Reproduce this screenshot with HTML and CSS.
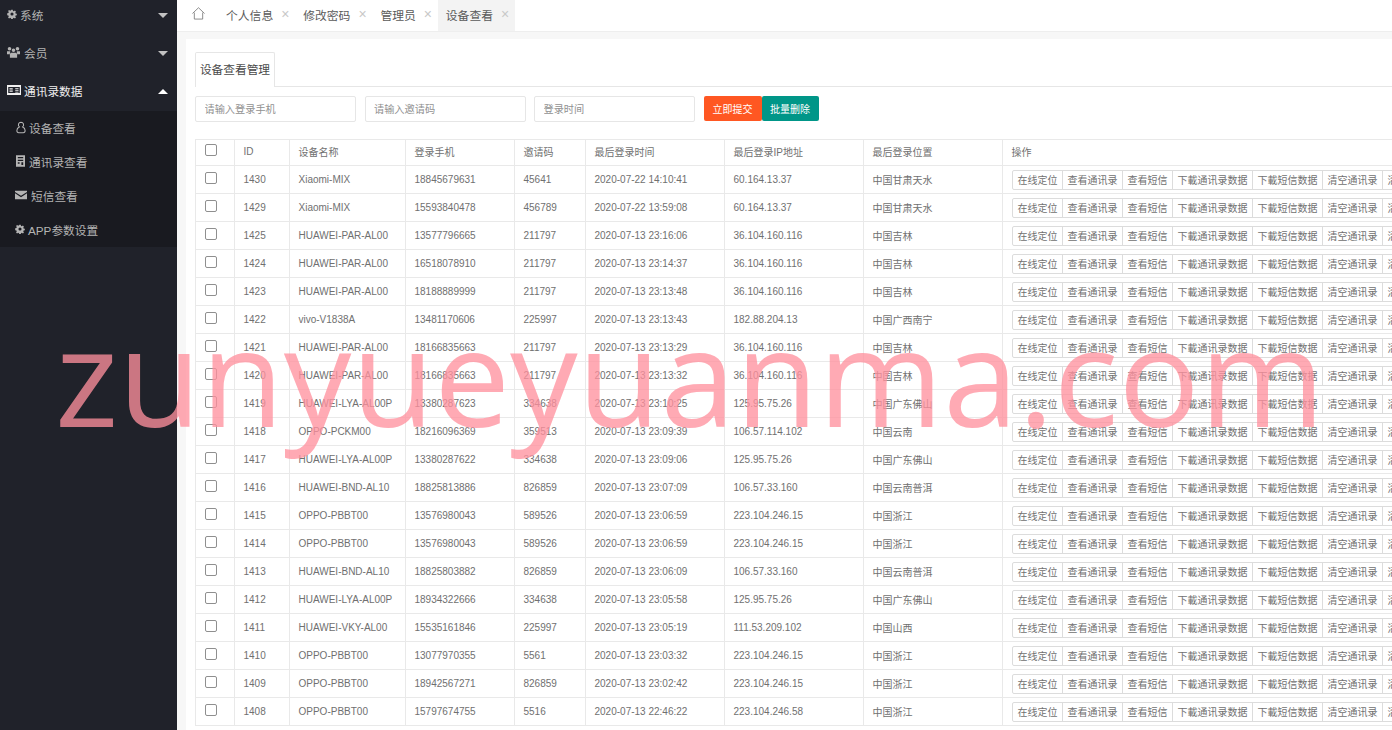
FILE: index.html
```html
<!DOCTYPE html>
<html lang="zh-CN">
<head>
    <meta charset="UTF-8">
    <title>设备查看管理</title>
    <link rel="stylesheet" href="styles.css">
</head>
<body>
    <div class="admin">
        <div class="side">
            <ul class="nav">
                <li class="nav-item">
                    <svg class="ico" viewBox="0 0 16 16"><path fill="currentColor" fill-rule="evenodd" d="M6.8 1h2.400l.4 2 1.300.6 1.800-1.100 1.600 1.700-1.100 1.700.5 1.300 2 .5v2.400l-2 .4-.5 1.300 1.100 1.800-1.600 1.600-1.800-1.100-1.300.5-.4 2H6.800l-.4-2-1.300-.5-1.800 1.100-1.600-1.600 1.100-1.800-.5-1.300-2-.4V6.700l2-.5.500-1.300-1.100-1.700 1.600-1.700 1.800 1.100 1.300-.6zM8 5.500a2.500 2.500 0 1 0 0 5 2.500 2.500 0 0 0 0-5z"/></svg>
                    <span>系统</span><i class="arrow"></i>
                </li>
                <li class="nav-item">
                    <svg class="ico ico-w" viewBox="0 0 18 16"><path fill="currentColor" d="M9 3a2.500 2.500 0 1 1 0 5 2.500 2.500 0 0 1 0-5zM3.500 1a2.500 2.500 0 1 1 0 5 2.500 2.500 0 0 1 0-5zm11 0a2.500 2.500 0 1 1 0 5 2.500 2.500 0 0 1 0-5zM0 7h4.500L4 10v1H0zm13.500 0H18v4h-4v-1zM5 9h8l1 2v5H4v-5z"/></svg>
                    <span>会员</span><i class="arrow"></i>
                </li>
                <li class="nav-item open">
                    <svg class="ico ico-card" viewBox="0 0 17 12"><path fill="currentColor" fill-rule="evenodd" d="M0 0h17v12H0zm1.500 2.500v7h14v-7zM3 4h4v1.500H3zm7 0h4v1H10zM3 6.500h4V8H3zM10 6h4v1h-4zm0 2h4v1h-4z"/></svg>
                    <span>通讯录数据</span><i class="arrow up"></i>
                </li>
                <li class="sub">
                    <a>
                        <svg class="ico ico-user" viewBox="0 0 16 16"><path fill="none" stroke="currentColor" stroke-width="1.400" d="M8 1a3.500 3.500 0 0 1 2.200 6.200c2 .8 3.300 2.700 3.300 4.800 0 1.900-1 3-2.500 3H5c-1.500 0-2.500-1.100-2.500-3 0-2.100 1.300-4 3.300-4.800A3.500 3.500 0 0 1 8 1z"/></svg>
                        <span>设备查看</span>
                    </a>
                    <a>
                        <svg class="ico ico-book" viewBox="0 0 10 13"><path fill="currentColor" fill-rule="evenodd" d="M0 0h10v13H0zm2 2v1.500h6V2zm0 3v1.500h6V5zm0 3v1.500h2V8zm4 0v3h2V8z"/></svg>
                        <span>通讯录查看</span>
                    </a>
                    <a>
                        <svg class="ico ico-mail" viewBox="0 0 14 10"><path fill="currentColor" d="M0 0h14v1.500L7 6 0 1.500zm0 3 7 4.500L14 3v7H0z"/></svg>
                        <span>短信查看</span>
                    </a>
                    <a>
                        <svg class="ico ico-gear" viewBox="0 0 16 16"><path fill="currentColor" fill-rule="evenodd" d="M6.800 1h2.400l.4 2 1.300.6 1.800-1.100 1.600 1.700-1.100 1.700.5 1.300 2 .5v2.400l-2 .4-.5 1.300 1.100 1.800-1.600 1.600-1.800-1.100-1.300.5-.4 2H6.800l-.4-2-1.300-.5-1.800 1.100-1.600-1.600 1.100-1.800-.5-1.300-2-.4V6.700l2-.5.5-1.300-1.100-1.700 1.600-1.700 1.800 1.100 1.300-.6zM8 5.500a2.500 2.500 0 1 0 0 5 2.500 2.500 0 0 0 0-5z"/></svg>
                        <span>APP参数设置</span>
                    </a>
                </li>
            </ul>
        </div>
        <div class="main">
            <div class="tabs">
                <svg class="home" viewBox="0 0 14 14"><path fill="none" stroke="#777" stroke-width="0.900" d="M.5 7 7 .8 13.500 7M2.500 6v7h9V6"/></svg>
                <div class="tab">个人信息<b>×</b></div>
                <div class="tab">修改密码<b>×</b></div>
                <div class="tab">管理员<b>×</b></div>
                <div class="tab current">设备查看<b>×</b></div>
            </div>
            <div class="body">
                <div class="card">
                    <div class="card-title"><span>设备查看管理</span></div>
                    <div class="filter">
                        <input type="text" placeholder="请输入登录手机">
                        <input type="text" placeholder="请输入邀请码">
                        <input type="text" placeholder="登录时间">
                        <div class="btns">
                            <button class="btn-submit">立即提交</button>
                            <button class="btn-del">批量删除</button>
                        </div>
                    </div>
                    <table class="list">
                        <colgroup>
                            <col class="c-check"><col class="c-id"><col class="c-name"><col class="c-phone"><col class="c-code"><col class="c-time"><col class="c-ip"><col class="c-addr"><col class="c-ops">
                        </colgroup>
                        <thead>
                            <tr>
                                <th><span class="check"></span></th>
                                <th>ID</th>
                                <th>设备名称</th>
                                <th>登录手机</th>
                                <th>邀请码</th>
                                <th>最后登录时间</th>
                                <th>最后登录IP地址</th>
                                <th>最后登录位置</th>
                                <th>操作</th>
                            </tr>
                        </thead>
                        <tbody id="rows"></tbody>
                    </table>
                </div>
            </div>
        </div>
    </div>
    <div class="mark">zunyueyuanma.com</div>
    <script src="script.js"></script>
</body>
</html>
```

FILE: styles.css
```css
* {
    box-sizing: border-box;
}
html, body {
    margin: 0;
    height: 100%;
    overflow: hidden;
}
body {
    font-family: "Liberation Sans", "Noto Sans CJK SC", sans-serif;
    font-size: 10px;
    color: #707070;
    background: #fff;
}
.admin {
    display: flex;
    height: 730px;
}
.side {
    width: 177px;
    flex: none;
    background: #20222a;
    overflow: hidden;
}
.nav {
    list-style: none;
    margin: -4px 0 0;
    padding: 0;
}
.nav-item {
    height: 38px;
    display: flex;
    align-items: center;
    padding: 0 0 2px 7px;
    font-size: 11.700px;
    color: #b4b4b4;
    position: relative;
}
.nav-item.open {
    color: #f0f0f0;
}
.nav-item .arrow {
    position: absolute;
    right: 9px;
    top: 17px;
    border: 5px solid transparent;
    border-top-color: #c2c2c2;
    border-bottom: 0;
}
.nav-item .arrow.up {
    border-top: 0;
    border-bottom: 5px solid #fff;
}
.ico {
    width: 10px;
    height: 10px;
    margin-right: 3px;
    flex: none;
}
.ico-w {
    width: 13px;
    height: 12px;
    margin-right: 4px;
}
.ico-card {
    width: 14px;
    height: 10px;
    margin-right: 3px;
}
.ico-user {
    width: 12px;
    height: 13px;
    margin-right: 2px;
}
.ico-book {
    width: 9px;
    height: 12px;
    margin: 0 4px 0 1px;
}
.ico-mail {
    width: 12px;
    height: 10px;
    margin-right: 4px;
}
.ico-gear {
    margin-right: 3px;
}
.sub {
    background: #191a20;
    margin-top: 1px;
}
.sub a {
    height: 34px;
    display: flex;
    align-items: center;
    padding: 0 0 2px 15px;
    font-size: 11.700px;
    color: #b4b4b4;
}
.main {
    flex: 1;
    min-width: 0;
    display: flex;
    flex-direction: column;
}
.tabs {
    height: 32px;
    flex: none;
    display: flex;
    align-items: stretch;
    border-bottom: 1px solid #eeeeee;
    padding-left: 15px;
    font-size: 11.800px;
    color: #5a5a5a;
}
.home {
    width: 13px;
    height: 13px;
    margin: 7px 13px 0 0;
}
.tab {
    display: flex;
    align-items: center;
    padding: 0 6px 3px 8px;
    white-space: nowrap;
}
.tab b {
    font-weight: normal;
    font-size: 14px;
    width: 8px;
    text-align: center;
    color: #c8c8c8;
    margin-left: 8px;
    line-height: 1;
}
.tab.current {
    background: #f3f3f3;
}
.body {
    flex: 1;
    background: #f7f7f7;
    padding: 7px 0 0 9px;
    overflow: hidden;
}
.card {
    width: 1300px;
    height: 800px;
    background: #fff;
    padding: 13px 9px;
}
.card-title {
    height: 35px;
    border-bottom: 1px solid #e6e6e6;
}
.card-title span {
    display: inline-block;
    height: 35px;
    width: 80px;
    line-height: 34px;
    text-align: center;
    background: #fff;
    border: 1px solid #e6e6e6;
    border-bottom: 0;
    border-radius: 2px 2px 0 0;
    font-size: 11.700px;
    color: #4a4a4a;
}
.filter {
    display: flex;
    margin-top: 9px;
    align-items: flex-start;
}
.filter input {
    width: 161px;
    height: 26px;
    margin-right: 8.500px;
    padding: 0 8.500px;
    border: 1px solid #e6e6e6;
    border-radius: 2px;
    font: inherit;
    font-size: 10.200px;
    outline: none;
}
.filter input::placeholder {
    color: #919191;
}
.btns {
    display: flex;
}
.btns button {
    height: 25px;
    border: 0;
    padding: 0;
    font: inherit;
    color: #fff;
    border-radius: 2px;
}
.btn-submit {
    width: 58px;
    background: #ff5722;
}
.btn-del {
    width: 57px;
    background: #009688;
}
.list {
    table-layout: fixed;
    border-collapse: collapse;
    width: 1420px;
    margin-top: 17px;
}
.c-check { width: 39px; }
.c-id { width: 55px; }
.c-name { width: 116px; }
.c-phone { width: 109px; }
.c-code { width: 71px; }
.c-time { width: 139px; }
.c-ip { width: 139px; }
.c-addr { width: 139px; }
.list th, .list td {
    border: 1px solid #e9e9e9;
    padding: 0 8.500px;
    text-align: left;
    font-weight: normal;
    white-space: nowrap;
    overflow: hidden;
    height: 28px;
}
.list th {
    height: 26px;
    padding-bottom: 2px;
}
.list th:first-child, .list td:first-child {
    padding-left: 9px;
}
.check {
    display: block;
    width: 12px;
    height: 12px;
    margin: -4px 0 0 0;
    border: 1px solid #8f8f8f;
    border-radius: 2px;
    background: #fff;
}
.ops {
    display: flex;
    padding: 1px 0 0 0.500px;
}
.ops span {
    flex: none;
    height: 20px;
    line-height: 19px;
    padding: 0 4.500px;
    border: 1px solid #dcdcdc;
    margin-left: -1px;
    background: #fff;
}
.ops span:first-child {
    margin-left: 0;
    border-radius: 2px 0 0 2px;
}
.mark {
    position: absolute;
    left: 55px;
    top: 300px;
    font-family: "Open Sans", sans-serif;
    font-size: 135px;
    line-height: 150px;
    white-space: nowrap;
    color: rgba(255, 145, 158, 0.77);
    pointer-events: none;
}
```

FILE: script.js
```js
var rows = [
    ["1430", "Xiaomi-MIX", "18845679631", "45641", "2020-07-22 14:10:41", "60.164.13.37", "中国甘肃天水"],
    ["1429", "Xiaomi-MIX", "15593840478", "456789", "2020-07-22 13:59:08", "60.164.13.37", "中国甘肃天水"],
    ["1425", "HUAWEI-PAR-AL00", "13577796665", "211797", "2020-07-13 23:16:06", "36.104.160.116", "中国吉林"],
    ["1424", "HUAWEI-PAR-AL00", "16518078910", "211797", "2020-07-13 23:14:37", "36.104.160.116", "中国吉林"],
    ["1423", "HUAWEI-PAR-AL00", "18188889999", "211797", "2020-07-13 23:13:48", "36.104.160.116", "中国吉林"],
    ["1422", "vivo-V1838A", "13481170606", "225997", "2020-07-13 23:13:43", "182.88.204.13", "中国广西南宁"],
    ["1421", "HUAWEI-PAR-AL00", "18166835663", "211797", "2020-07-13 23:13:29", "36.104.160.116", "中国吉林"],
    ["1420", "HUAWEI-PAR-AL00", "18166835663", "211797", "2020-07-13 23:13:32", "36.104.160.116", "中国吉林"],
    ["1419", "HUAWEI-LYA-AL00P", "13380287623", "334638", "2020-07-13 23:10:25", "125.95.75.26", "中国广东佛山"],
    ["1418", "OPPO-PCKM00", "18216096369", "359513", "2020-07-13 23:09:39", "106.57.114.102", "中国云南"],
    ["1417", "HUAWEI-LYA-AL00P", "13380287622", "334638", "2020-07-13 23:09:06", "125.95.75.26", "中国广东佛山"],
    ["1416", "HUAWEI-BND-AL10", "18825813886", "826859", "2020-07-13 23:07:09", "106.57.33.160", "中国云南普洱"],
    ["1415", "OPPO-PBBT00", "13576980043", "589526", "2020-07-13 23:06:59", "223.104.246.15", "中国浙江"],
    ["1414", "OPPO-PBBT00", "13576980043", "589526", "2020-07-13 23:06:59", "223.104.246.15", "中国浙江"],
    ["1413", "HUAWEI-BND-AL10", "18825803882", "826859", "2020-07-13 23:06:09", "106.57.33.160", "中国云南普洱"],
    ["1412", "HUAWEI-LYA-AL00P", "18934322666", "334638", "2020-07-13 23:05:58", "125.95.75.26", "中国广东佛山"],
    ["1411", "HUAWEI-VKY-AL00", "15535161846", "225997", "2020-07-13 23:05:19", "111.53.209.102", "中国山西"],
    ["1410", "OPPO-PBBT00", "13077970355", "5561", "2020-07-13 23:03:32", "223.104.246.15", "中国浙江"],
    ["1409", "OPPO-PBBT00", "18942567271", "826859", "2020-07-13 23:02:42", "223.104.246.15", "中国浙江"],
    ["1408", "OPPO-PBBT00", "15797674755", "5516", "2020-07-13 22:46:22", "223.104.246.58", "中国浙江"]
];
var ops = ["在线定位", "查看通讯录", "查看短信", "下載通讯录数据", "下載短信数据", "清空通讯录", "清空短信"];
var html = "";
rows.forEach(function (r) {
    html += '<tr><td><span class="check"></span></td>';
    r.forEach(function (v) {
        html += "<td>" + v + "</td>";
    });
    html += '<td><div class="ops">' + ops.map(function (o) {
        return "<span>" + o + "</span>";
    }).join("") + "</div></td></tr>";
});
document.getElementById("rows").innerHTML = html;
```
